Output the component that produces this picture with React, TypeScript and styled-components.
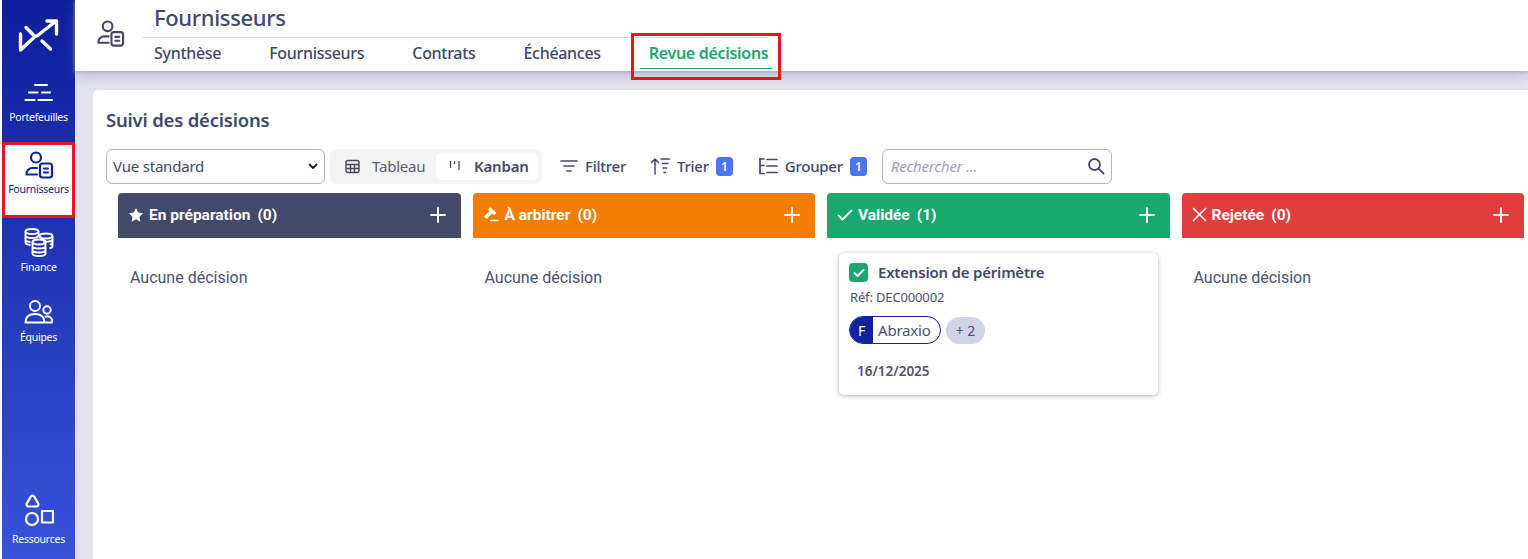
import React from "react";
import styled, { createGlobalStyle } from "styled-components";

const Global = createGlobalStyle`
  html, body { margin: 0; padding: 0; height: 100%; background: #fff; overflow: hidden; }
  #root { height: 559px; }
  * { box-sizing: border-box; }
`;

const sans = `"Source Sans Pro", "Noto Sans", sans-serif`;
const ink = "#42496b";

const Page = styled.div`
  display: flex;
  width: 1528px;
  height: 559px;
  padding-left: 2px;
  overflow: hidden;
  font-family: ${sans};
  color: ${ink};
`;

const Sidebar = styled.nav`
  width: 73px;
  flex: none;
  display: flex;
  flex-direction: column;
  align-items: stretch;
  background: linear-gradient(180deg, #0e1e9b 0%, #3753d8 100%);
`;

const Logo = styled.div`
  height: 70px;
  display: flex;
  align-items: center;
  justify-content: center;
  padding-top: 1px;
`;

const NavItem = styled.div<{ $active?: boolean }>`
  height: ${(p) => (p.$active ? "76px" : "72px")};
  display: flex;
  flex-direction: column;
  align-items: center;
  justify-content: flex-start;
  padding-top: ${(p) => (p.$active ? "6px" : "9px")};
  gap: 1px;
  background: ${(p) => (p.$active ? "#fff" : "transparent")};
  border: ${(p) => (p.$active ? "3px solid #e4191f" : "none")};
  color: ${(p) => (p.$active ? "#1122a0" : "#fff")};
  font-size: 10.5px;
  letter-spacing: -0.25px;
  line-height: 14px;
  white-space: nowrap;
  svg { display: block; }
`;

const NavSpacer = styled.div`
  flex: 1;
`;

const Main = styled.div`
  flex: 1;
  min-width: 0;
  display: flex;
  flex-direction: column;
  background: linear-gradient(90deg, #e1e1ee 0, #e4e4f0 18px);
`;

const Header = styled.header`
  height: 71px;
  flex: none;
  display: flex;
  background: #fff;
  box-shadow: 0 1px 3px #a9acc2, 0 5px 12px rgba(110, 114, 160, 0.35);
  position: relative;
  z-index: 1;
  padding-left: 21px;
`;

const HeaderIcon = styled.div`
  width: 32px;
  padding-top: 20px;
  flex: none;
`;

const HeaderBody = styled.div`
  margin-left: 15px;
  display: flex;
  flex-direction: column;
`;

const Title = styled.h1`
  margin: 0;
  height: 38px;
  padding: 3px 0 0 11px;
  font-size: 22px;
  line-height: 28px;
  font-weight: 500;
  letter-spacing: -0.35px;
  border-bottom: 1px solid #d7d7dc;
  color: ${ink};
`;

const Tabs = styled.div`
  display: flex;
  padding-left: 11px;
  gap: 48px;
`;

const Tab = styled.div<{ $active?: boolean }>`
  position: relative;
  font-size: 16px;
  font-weight: ${(p) => (p.$active ? 600 : 500)};
  line-height: 30px;
  letter-spacing: -0.3px;
  color: ${(p) => (p.$active ? "#1aa86f" : ink)};
  ${(p) =>
    p.$active &&
    `
    margin-left: 0;
    &::before {
      content: "";
      position: absolute;
      left: -18px;
      right: -13px;
      top: -5px;
      height: 41px;
      border: 3px solid #e4191f;
    }
    &::after {
      content: "";
      position: absolute;
      left: -9px;
      right: -4px;
      top: 30px;
      height: 1px;
      background: #1aa86f;
    }
  `}
`;

const Panel = styled.main`
  flex: 1;
  margin: 19px 0 0 18px;
  background: #fff;
  border-radius: 5px 0 0 0;
  padding: 18px 4px 0 13px;
  min-height: 0;
`;

const Heading = styled.h2`
  margin: 0;
  height: 24px;
  font-size: 18.5px;
  line-height: 24px;
  font-weight: 600;
  letter-spacing: -0.2px;
  color: ${ink};
`;

const Toolbar = styled.div`
  display: flex;
  align-items: center;
  margin-top: 16px;
  height: 36px;
`;

const SelectBox = styled.div`
  width: 219px;
  height: 35px;
  border: 1px solid #b5b5c9;
  border-radius: 6px;
  display: flex;
  align-items: center;
  justify-content: space-between;
  padding: 0 6px;
  font-size: 15px;
  letter-spacing: -0.2px;
  color: ${ink};
`;

const Segment = styled.div`
  margin-left: 5px;
  width: 212px;
  height: 35px;
  padding: 4px;
  background: #f2f4f5;
  border-radius: 7px;
  display: flex;
  align-items: stretch;
`;

const SegmentItem = styled.div<{ $active?: boolean }>`
  width: ${(p) => (p.$active ? "102px" : "102px")};
  border-radius: 5px;
  background: ${(p) => (p.$active ? "#fff" : "transparent")};
  display: flex;
  align-items: center;
  gap: ${(p) => (p.$active ? "13px" : "12px")};
  padding-left: ${(p) => (p.$active ? "13px" : "11px")};
  font-size: 15px;
  font-weight: ${(p) => (p.$active ? 600 : 400)};
  letter-spacing: -0.2px;
  color: ${(p) => (p.$active ? ink : "#565c7a")};
`;

const ToolButton = styled.div<{ $ml: number }>`
  margin-left: ${(p) => p.$ml}px;
  display: flex;
  align-items: center;
  gap: 6px;
  font-size: 15px;
  font-weight: 500;
  letter-spacing: -0.25px;
  color: ${ink};
`;

const Badge = styled.span`
  width: 17px;
  height: 19px;
  margin-left: 1px;
  border-radius: 4px;
  background: #4a74f0;
  color: #fff;
  display: flex;
  align-items: center;
  justify-content: center;
  font-size: 12px;
  font-weight: 600;
`;

const Search = styled.div`
  margin-left: 15px;
  width: 230px;
  height: 35px;
  border: 1px solid #b5b5c9;
  border-radius: 6px;
  display: flex;
  align-items: center;
  justify-content: space-between;
  padding: 0 6px 0 8px;
  font-size: 15px;
  font-style: italic;
  letter-spacing: -0.2px;
  color: #9b9db0;
`;

const Board = styled.div`
  margin: 9px 0 0 12px;
  display: grid;
  grid-template-columns: repeat(4, 1fr);
  gap: 12px;
`;

const Column = styled.section``;

const ColumnHead = styled.div<{ $bg: string }>`
  height: 45px;
  background: ${(p) => p.$bg};
  border-radius: 4px 4px 0 0;
  display: flex;
  align-items: center;
  padding: 0 15px 2px 10px;
  color: #fff;
  font-family: Roboto, sans-serif;
  font-weight: 700;
  font-size: 15.5px;
  gap: 5px;
  svg { flex: none; }
`;

const Count = styled.span`
  margin-left: 2px;
  flex: 1;
`;

const Empty = styled.div`
  padding: 30px 12px 0;
  font-family: Roboto, sans-serif;
  font-size: 16px;
  line-height: 20px;
  color: #4c5270;
`;

const Card = styled.article`
  margin: 15px 12px 0;
  height: 142px;
  background: #fff;
  border-radius: 5px;
  box-shadow: 0 1px 4px rgba(76, 80, 120, 0.45);
  padding: 10px;
`;

const CardTitle = styled.div`
  display: flex;
  align-items: center;
  gap: 10px;
  font-size: 15px;
  line-height: 19px;
  font-weight: 600;
  letter-spacing: -0.2px;
  color: ${ink};
`;

const CheckBox = styled.span`
  width: 19px;
  height: 19px;
  border-radius: 4px;
  background: #1aa86f;
  display: flex;
  align-items: center;
  justify-content: center;
`;

const Ref = styled.div`
  margin-top: 6px;
  padding-left: 1px;
  font-size: 13px;
  line-height: 18px;
  letter-spacing: -0.15px;
  color: #4c5270;
`;

const Chips = styled.div`
  display: flex;
  align-items: center;
  gap: 5px;
  margin-top: 10px;
`;

const Chip = styled.div`
  width: 92px;
  height: 28px;
  border: 1px solid #1122a0;
  border-radius: 14px;
  display: flex;
  align-items: center;
  overflow: hidden;
  font-size: 15px;
  letter-spacing: -0.2px;
  color: #4c5270;
`;

const ChipInitial = styled.span`
  width: 23px;
  height: 100%;
  background: #1122a0;
  color: #fff;
  display: flex;
  align-items: center;
  justify-content: center;
  margin-right: 5px;
  font-size: 14px;
`;

const MoreChip = styled.div`
  width: 39px;
  height: 27px;
  border-radius: 14px;
  background: #d0d4e8;
  display: flex;
  align-items: center;
  justify-content: center;
  font-size: 14px;
  color: #4c5270;
`;

const CardDate = styled.div`
  margin: 18px 0 0 8px;
  font-size: 13.5px;
  line-height: 18px;
  font-weight: 600;
  color: #4c5270;
`;

const PersonCard = ({ color, size = 30 }: { color: string; size?: number }) => (
  <svg width={size} height={size} viewBox="0 0 30 30" fill="none" stroke={color} strokeWidth="2.2" strokeLinecap="round" strokeLinejoin="round">
    <circle cx="12" cy="6.5" r="5" />
    <path d="M13 17H8a6 6 0 0 0-5.5 6.5H13" />
    <rect x="16" y="12.5" width="12" height="14" rx="2.5" />
    <path d="M20 17.5h4M20 21.5h4" />
  </svg>
);

const SortArrowIcon = () => (
  <svg width="21" height="20" viewBox="0 0 21 20" fill="none" stroke={ink} strokeWidth="1.5" strokeLinecap="round" strokeLinejoin="round">
    <path d="M5 18V3M1.5 6.5 5 3l3.5 3.5M11 3h8.5M12.5 7.5H18M13 12h3.5M14 16.5h1.5" />
  </svg>
);

const GroupIcon = () => (
  <svg width="21" height="20" viewBox="0 0 21 20" fill="none" stroke={ink} strokeWidth="1.7" strokeLinecap="round" strokeLinejoin="round">
    <path d="M2 2.5v15h4M2 9.5h4M9 3.5h10M9 10h10M9 16.5h10" />
    <path d="M2 3h4" />
  </svg>
);

const Plus = () => (
  <svg width="16" height="16" viewBox="0 0 16 16" stroke="#fff" strokeWidth="2" strokeLinecap="round">
    <path d="M8 1v14M1 8h14" />
  </svg>
);

const columns = [
  {
    label: "En préparation",
    count: 0,
    bg: "#42496b",
    icon: (
      <svg width="16" height="16" viewBox="0 0 24 24" fill="#fff">
        <path d="m12 1.5 3.2 6.9 7.5.9-5.5 5.2 1.4 7.5L12 18.4l-6.6 3.6 1.4-7.5L1.3 9.3l7.5-.9z" />
      </svg>
    ),
  },
  {
    label: "À arbitrer",
    count: 0,
    bg: "#f17e00",
    icon: (
      <svg width="17" height="17" viewBox="0 0 17 17" fill="#fff" stroke="#fff" strokeLinecap="round" strokeLinejoin="round">
        <path d="M7.5 2 13 7l-2 1.5L9 7 3.5 12.5 1.5 10.5 7 5.5 5.8 3.6z" strokeWidth="1" />
        <path d="M7.5 14.5h7.5" strokeWidth="1.4" />
      </svg>
    ),
  },
  {
    label: "Validée",
    count: 1,
    bg: "#1aa86f",
    icon: (
      <svg width="16" height="16" viewBox="0 0 16 16" fill="none" stroke="#fff" strokeWidth="1.8" strokeLinecap="round" strokeLinejoin="round">
        <path d="m1.5 8.5 4 4 9-9" />
      </svg>
    ),
  },
  {
    label: "Rejetée",
    count: 0,
    bg: "#e03e3e",
    icon: (
      <svg width="15" height="15" viewBox="0 0 15 15" fill="none" stroke="#fff" strokeWidth="1.7" strokeLinecap="round">
        <path d="m1.5 1.5 12 12M13.5 1.5l-12 12" />
      </svg>
    ),
  },
];

export default function App() {
  return (
    <Page>
      <Global />
      <Sidebar>
        <Logo>
          <svg width="42" height="36" viewBox="0 0 42 36" fill="none" stroke="#fff" strokeWidth="3.4" strokeLinecap="round" strokeLinejoin="round">
            <path d="M2.5 16v16L17 18.5 8 9.5" />
            <path d="M19 18 38 3H29M38.5 3v13" />
            <path d="M24 23l8.5 8" />
          </svg>
        </Logo>
        <NavItem>
          <svg width="30" height="30" viewBox="0 0 30 30" fill="none" stroke="#fff" strokeWidth="2.2" strokeLinecap="round">
            <path d="M11 6h12M5 13.5h8.5M18 13.5h8M1.5 21h9M14.5 21h13.5M5 13.5h0" />
          </svg>
          Portefeuilles
        </NavItem>
        <NavItem $active>
          <PersonCard color="#1122a0" />
          Fournisseurs
        </NavItem>
        <NavItem>
          <svg width="32" height="32" viewBox="0 0 32 32" fill="none" stroke="#fff" strokeWidth="1.9">
            <ellipse cx="9" cy="4.5" rx="6.5" ry="2.5" />
            <path d="M2.5 4.5v11c0 1.4 2 2.3 5 2.5M15.5 4.5V9M2.5 8.5c0 1.4 2.9 2.5 6.5 2.5s6.5-1.1 6.5-2.5M2.5 12.5c0 1.3 2 2.3 5 2.5" />
            <ellipse cx="23" cy="9" rx="6.5" ry="2.5" />
            <path d="M29.5 9v10c0 1.2-1.2 2-3 2.4M20 14.5c3 .5 9.5 0 9.5-2M27 17.5c1.5-.3 2.5-1 2.5-2" />
            <ellipse cx="16" cy="15" rx="6.5" ry="2.5" />
            <path d="M9.5 15v11.5C9.5 28 12.4 29 16 29s6.5-1 6.5-2.5V15M9.5 19c0 1.4 2.9 2.5 6.5 2.5s6.5-1.1 6.5-2.5M9.5 23c0 1.4 2.9 2.5 6.5 2.5s6.5-1.1 6.5-2.5" />
          </svg>
          Finance
        </NavItem>
        <NavItem>
          <svg width="30" height="30" viewBox="0 0 30 30" fill="none" stroke="#fff" strokeWidth="2" strokeLinecap="round" strokeLinejoin="round">
            <circle cx="11" cy="7" r="5" />
            <path d="M1.5 23.5c0-6 3.5-8.5 9.5-8.5s9.5 2.5 9.5 8.5z" />
            <circle cx="23" cy="11" r="3.7" />
            <path d="M21.5 17.5h2a4.5 4.5 0 0 1 4.5 6h-6" />
          </svg>
          Équipes
        </NavItem>
        <NavSpacer />
        <NavItem style={{ height: 66, paddingTop: 0 }}>
          <svg width="30" height="38" viewBox="0 0 30 38" fill="none" stroke="#fff" strokeWidth="2.2" strokeLinejoin="round">
            <path d="M8.5 2.5a2 2 0 0 1 1.7 1l4 7a2 2 0 0 1-1.7 3h-8a2 2 0 0 1-1.7-3l4-7a2 2 0 0 1 1.7-1z" />
            <circle cx="8" cy="26" r="6" />
            <rect x="18" y="18" width="11" height="11.5" />
          </svg>
          Ressources
        </NavItem>
      </Sidebar>
      <Main>
        <Header>
          <HeaderIcon>
            <PersonCard color={ink} size={29} />
          </HeaderIcon>
          <HeaderBody>
            <Title>Fournisseurs</Title>
            <Tabs>
              <Tab>Synthèse</Tab>
              <Tab>Fournisseurs</Tab>
              <Tab>Contrats</Tab>
              <Tab>Échéances</Tab>
              <Tab $active>Revue décisions</Tab>
            </Tabs>
          </HeaderBody>
        </Header>
        <Panel>
          <Heading>Suivi des décisions</Heading>
          <Toolbar>
            <SelectBox>
              Vue standard
              <svg width="10" height="7" viewBox="0 0 10 7" fill="none" stroke="#222" strokeWidth="1.8" strokeLinecap="round" strokeLinejoin="round">
                <path d="m1.5 1.5 3.5 3.5 3.5-3.5" />
              </svg>
            </SelectBox>
            <Segment>
              <SegmentItem>
                <svg width="15" height="15" viewBox="0 0 15 15" fill="none" stroke={ink} strokeWidth="1.4">
                  <rect x="1" y="1.5" width="13" height="12" rx="2" />
                  <path d="M1 5.5h13M1 9.5h13M5.5 5.5v8M9.5 5.5v8" />
                </svg>
                Tableau
              </SegmentItem>
              <SegmentItem $active>
                <svg width="12" height="12" viewBox="0 0 12 12" fill="none" stroke={ink} strokeWidth="1.3">
                  <path d="M1.5 1v7M5.5 1v3M10 1v9" />
                </svg>
                Kanban
              </SegmentItem>
            </Segment>
            <ToolButton $ml={17}>
              <svg width="20" height="14" viewBox="0 0 20 14" fill="none" stroke={ink} strokeWidth="1.7" strokeLinecap="round">
                <path d="M2 2h16M5 7h10M8 12h4" />
              </svg>
              Filtrer
            </ToolButton>
            <ToolButton $ml={24}>
              <SortArrowIcon />
              Trier
              <Badge>1</Badge>
            </ToolButton>
            <ToolButton $ml={25}>
              <GroupIcon />
              Grouper
              <Badge>1</Badge>
            </ToolButton>
            <Search>
              Rechercher ...
              <svg width="18" height="18" viewBox="0 0 18 18" fill="none" stroke={ink} strokeWidth="1.8" strokeLinecap="round">
                <circle cx="7.5" cy="7.5" r="5.5" />
                <path d="m11.8 11.8 4.7 4.7" />
              </svg>
            </Search>
          </Toolbar>
          <Board>
            {columns.map((c) => (
              <Column key={c.label}>
                <ColumnHead $bg={c.bg}>
                  {c.icon}
                  {c.label}
                  <Count>({c.count})</Count>
                  <Plus />
                </ColumnHead>
                {c.count === 0 ? (
                  <Empty>Aucune décision</Empty>
                ) : (
                  <Card>
                    <CardTitle>
                      <CheckBox>
                        <svg width="12" height="10" viewBox="0 0 12 10" fill="none" stroke="#fff" strokeWidth="2" strokeLinecap="round" strokeLinejoin="round">
                          <path d="m1.5 5 3 3 6-6" />
                        </svg>
                      </CheckBox>
                      Extension de périmètre
                    </CardTitle>
                    <Ref>Réf: DEC000002</Ref>
                    <Chips>
                      <Chip>
                        <ChipInitial>F</ChipInitial>
                        Abraxio
                      </Chip>
                      <MoreChip>+ 2</MoreChip>
                    </Chips>
                    <CardDate>16/12/2025</CardDate>
                  </Card>
                )}
              </Column>
            ))}
          </Board>
        </Panel>
      </Main>
    </Page>
  );
}
